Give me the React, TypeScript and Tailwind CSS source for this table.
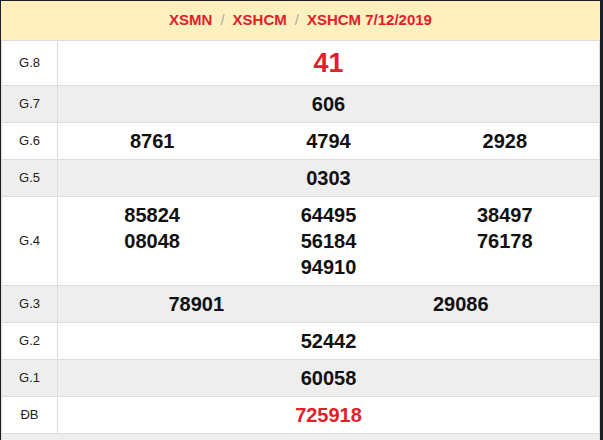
const red = 'text-[#e2202a]';

type Row = { label: string; cols: string[][]; gray: boolean; h: string; big?: boolean; isRed?: boolean };

const rows: Row[] = [
  { label: 'G.8', cols: [['41']], gray: false, h: 'h-[45px]', big: true, isRed: true },
  { label: 'G.7', cols: [['606']], gray: true, h: 'h-[37px]' },
  { label: 'G.6', cols: [['8761'], ['4794'], ['2928']], gray: false, h: 'h-[37px]' },
  { label: 'G.5', cols: [['0303']], gray: true, h: 'h-[37px]' },
  {
    label: 'G.4',
    cols: [
      ['85824', '08048'],
      ['64495', '56184', '94910'],
      ['38497', '76178'],
    ],
    gray: false,
    h: 'h-[89px]',
  },
  { label: 'G.3', cols: [['78901'], ['29086']], gray: true, h: 'h-[37px]' },
  { label: 'G.2', cols: [['52442']], gray: false, h: 'h-[37px]' },
  { label: 'G.1', cols: [['60058']], gray: true, h: 'h-[37px]' },
  { label: 'ĐB', cols: [['725918']], gray: false, h: 'h-[37px]', isRed: true },
];

function ResultRow({ row }: { row: Row }) {
  const multi = row.cols.some((c) => c.length > 1);
  return (
    <div
      className={`flex border-b border-[#dddddd] ${row.h} ${row.gray ? 'bg-[#eeeeee]' : 'bg-white'}`}
    >
      <div className="w-[56px] shrink-0 border-r border-[#dddddd] flex items-center justify-center text-[13px] text-[#222]">
        {row.label}
      </div>
      <div className={`flex-1 flex px-[6px] ${multi ? 'items-start pt-[5px]' : 'items-center'}`}>
        {row.cols.map((col, i) => (
          <div key={i} className="flex-1 flex flex-col items-center">
            {col.map((n) => (
              <span
                key={n}
                className={`font-bold leading-[26px] ${row.big ? 'text-[27px]' : 'text-[20px]'} ${row.isRed ? red : 'text-[#111]'}`}
              >
                {n}
              </span>
            ))}
          </div>
        ))}
      </div>
    </div>
  );
}

export default function App() {
  return (
    <div
      className="h-[440px] w-[603px] bg-[#1b2026] pt-[1px] pl-[1px] overflow-hidden"
      style={{ fontFamily: '"Liberation Sans", Arial, sans-serif' }}
    >
      <div className="w-[599px]">
        <div className="h-[40px] bg-[#fff1bf] border-b border-[#dddddd] flex items-center justify-center text-[15px] font-bold">
          <span className={red}>XSMN</span>
          <span className="text-[#aaa] font-normal mx-[8px]">/</span>
          <span className={red}>XSHCM</span>
          <span className="text-[#aaa] font-normal mx-[8px]">/</span>
          <span className={red}>XSHCM 7/12/2019</span>
        </div>
        <div className="border-l border-r border-[#dddddd]">
          {rows.map((r) => (
            <ResultRow key={r.label} row={r} />
          ))}
          <div className="h-[37px] bg-[#eeeeee]" />
        </div>
      </div>
    </div>
  );
}
